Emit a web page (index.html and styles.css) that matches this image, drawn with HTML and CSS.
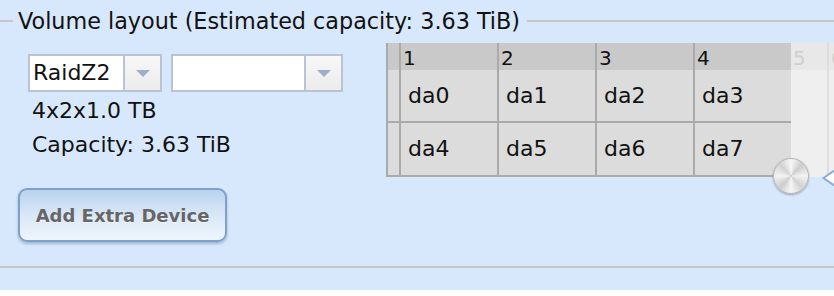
FILE: index.html
```html
<!DOCTYPE html>
<html lang="en">
<head>
    <meta charset="UTF-8">
    <title>Volume layout</title>
    <link rel="stylesheet" href="styles.css">
</head>
<body>
    <div class="panel">
        <fieldset class="layout">
            <legend>Volume layout (Estimated capacity: 3.63 TiB)</legend>

            <div class="left">
                <div class="combos">
                    <div class="combo type">
                        <span class="combo-text">RaidZ2</span>
                        <span class="combo-btn"><svg width="14" height="7" viewBox="0 0 14 7"><polygon points="0,0 14,0 7,7" fill="#9eafcb"/></svg></span>
                    </div>
                    <div class="combo size">
                        <span class="combo-text"></span>
                        <span class="combo-btn"><svg width="14" height="7" viewBox="0 0 14 7"><polygon points="0,0 14,0 7,7" fill="#9eafcb"/></svg></span>
                    </div>
                </div>
                <div class="info">
                    <div>4x2x1.0 TB</div>
                    <div>Capacity: 3.63 TiB</div>
                </div>
                <button class="extra">Add Extra Device</button>
            </div>

            <div class="disks">
                <div class="row head">
                    <div class="gutter"></div>
                    <div class="cell">1</div>
                    <div class="cell">2</div>
                    <div class="cell">3</div>
                    <div class="cell">4</div>
                    <div class="cell off first">5</div>
                    <div class="cell off">6</div>
                </div>
                <div class="row">
                    <div class="gutter"></div>
                    <div class="cell">da0</div>
                    <div class="cell">da1</div>
                    <div class="cell">da2</div>
                    <div class="cell">da3</div>
                    <div class="cell off first"></div>
                    <div class="cell off"></div>
                </div>
                <div class="row last">
                    <div class="gutter"></div>
                    <div class="cell">da4</div>
                    <div class="cell">da5</div>
                    <div class="cell">da6</div>
                    <div class="cell">da7</div>
                    <div class="cell off first"></div>
                    <div class="cell off"></div>
                </div>
                <div class="knob"></div>
                <svg class="tip" width="16" height="28" viewBox="0 0 16 28"><polygon points="1.5,13 16,3 16,23" fill="#fff" stroke="#8aaed6" stroke-width="2"/></svg>
            </div>
        </fieldset>
    </div>
</body>
</html>
```

FILE: styles.css
```css
html, body {
    overflow: hidden;
}
body {
    margin: 0;
    background: #fff;
    font-family: "DejaVu Sans", Verdana, sans-serif;
    color: #111;
}
.panel {
    background: #d8e8fc;
    padding: 8px 0 22px;
}
.layout {
    display: flex;
    align-items: flex-start;
    margin: 0;
    min-width: 0;
    padding: 9px 0 24px 13px;
    border: none;
    border-top: 2px solid #c6c6c6;
    border-bottom: 2px solid #c6c6c6;
}
.layout legend {
    padding: 0 7px 0 5px;
    font-size: 22.3px;
    line-height: 26px;
}
.left {
    flex: none;
    width: 373px;
    padding-top: 11px;
}
.combos {
    display: flex;
    gap: 9px;
    margin-left: 15px;
}
.combo {
    display: flex;
    box-sizing: border-box;
    height: 38px;
    border: 2px solid #b9c3d4;
    background: #fff;
}
.combo.type {
    width: 134px;
}
.combo.size {
    width: 172px;
}
.combo-text {
    flex: 1;
    padding-left: 3px;
    font-size: 22px;
    line-height: 34px;
}
.combo-btn {
    display: flex;
    align-items: center;
    justify-content: center;
    width: 35px;
    border-left: 2px solid #b9c3d4;
    background: linear-gradient(#f7f7f7, #ececec);
}
.info {
    margin: 2px 0 0 19px;
    font-size: 22px;
    line-height: 34px;
}
.extra {
    display: block;
    box-sizing: border-box;
    width: 209px;
    height: 54px;
    margin: 26px 0 0 5px;
    border: 2px solid #7ea1c8;
    border-radius: 9px;
    background: linear-gradient(#b9d4f0, #dce9f8 55%, #eef5fd);
    box-shadow: 0 2px 3px rgba(60, 90, 130, 0.35);
    color: #666;
    font-family: "DejaVu Sans", Verdana, sans-serif;
    font-size: 18px;
    font-weight: bold;
    text-shadow: 0 1px 0 rgba(255, 255, 255, 0.6);
}
.disks {
    position: relative;
    flex: none;
    border-left: 2px solid #aaa;
}
.row {
    display: flex;
    height: 51px;
    border-bottom: 2px solid #aaa;
}
.row.head {
    height: 27px;
    border-bottom: none;
}
.row.last {
    height: 52px;
}
.gutter {
    width: 11px;
    background: #dcdcdc;
}
.head .gutter {
    background: #c9c9c9;
}
.cell {
    box-sizing: border-box;
    width: 98px;
    padding-left: 7px;
    border-left: 2px solid #aaa;
    background: #dcdcdc;
    font-size: 22px;
    line-height: 51px;
}
.last .cell {
    line-height: 52px;
}
.head .cell {
    padding-left: 2px;
    background: #c9c9c9;
    font-size: 20px;
    line-height: 30px;
}
.cell.off {
    width: 38px;
    padding-left: 2px;
    border-left-color: #dddddd;
    background: #efefef;
    color: #cfcfcf;
}
.cell.off.first {
    width: 36px;
    border-left: none;
}
.head .cell.off {
    background: #e8e8e8;
}
.row .cell.off {
    margin-bottom: -2px;
}
.knob {
    position: absolute;
    left: 385px;
    top: 115px;
    box-sizing: border-box;
    width: 36px;
    height: 36px;
    border: 1px solid #b4b4b4;
    border-radius: 50%;
    background: conic-gradient(#f7f7f7, #cdcdcd 12%, #f2f2f2 25%, #d2d2d2 38%, #f7f7f7 50%, #cdcdcd 62%, #f2f2f2 75%, #d2d2d2 88%, #f7f7f7);
    box-shadow: 0 1px 2px rgba(0, 0, 0, 0.3);
}
.tip {
    position: absolute;
    left: 434px;
    top: 122px;
}
```
